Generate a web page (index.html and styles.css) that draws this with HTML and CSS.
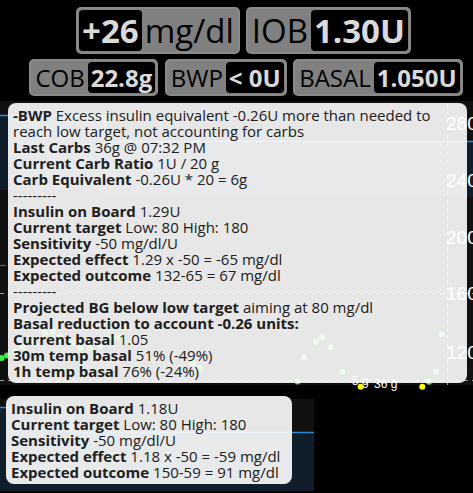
FILE: index.html
```html
<!DOCTYPE html>
<html>
<head>
<meta charset="utf-8">
<link rel="stylesheet" href="styles.css">
</head>
<body>
<div class="app">
  <header class="pills">
    <div class="row row-lg">
      <div class="pill"><em>+26</em><span>mg/dl</span></div>
      <div class="pill"><span>IOB</span><em>1.30U</em></div>
    </div>
    <div class="row row-md">
      <div class="pill"><span>COB</span><em>22.8g</em></div>
      <div class="pill"><span>BWP</span><em>&lt; 0U</em></div>
      <div class="pill"><span>BASAL</span><em>1.050U</em></div>
    </div>
  </header>

  <svg class="chart" width="473" height="397" viewBox="0 96 473 397">
    <!-- main chart -->
    <rect x="0" y="101" width="473" height="284" fill="#111"/>
    <path d="M0 115 H105 V141 H473 V197 H105 V190 H0 Z" fill="#0f1e2a"/>
    <path d="M0 115.5 H105 V141.5 H473" fill="none" stroke="#2b8ad6" stroke-width="1.5"/>
    <g stroke="#9a9a9a" stroke-width="1" stroke-dasharray="4 4" fill="none">
      <line x1="0" y1="293.5" x2="473" y2="293.5"/>
      <line x1="0" y1="380.5" x2="473" y2="380.5"/>
      <line x1="447.5" y1="103" x2="447.5" y2="385"/>
    </g>
    <line x1="0" y1="265.5" x2="6" y2="265.5" stroke="#666"/>
    <g class="ylab" fill="#fff" font-size="19">
      <text x="446" y="130">280</text>
      <text x="446" y="187">240</text>
      <text x="446" y="244">200</text>
      <text x="446" y="300">160</text>
      <text x="446" y="359">120</text>
    </g>
    <g fill="#3df03d">
      <circle cx="1.7" cy="358" r="3"/>
      <circle cx="7" cy="355.5" r="3"/>
      <circle cx="15" cy="352" r="3"/>
      <circle cx="22" cy="346.5" r="3"/>
      <circle cx="33" cy="341.5" r="3"/>
      <circle cx="45" cy="333" r="3"/>
      <circle cx="53" cy="331" r="3"/>
      <circle cx="60" cy="336.5" r="3"/>
      <circle cx="72" cy="343" r="3"/>
      <circle cx="80" cy="348" r="3"/>
      <circle cx="90" cy="348" r="3"/>
      <circle cx="100" cy="346" r="3"/>
      <circle cx="113" cy="338" r="3"/>
      <circle cx="120" cy="337" r="3"/>
      <circle cx="193" cy="363" r="3"/>
      <circle cx="200" cy="368" r="3"/>
      <circle cx="297.5" cy="381.5" r="3"/>
      <circle cx="304" cy="357.3" r="3"/>
      <circle cx="316" cy="341.7" r="3"/>
      <circle cx="321.7" cy="337.3" r="3"/>
      <circle cx="330.7" cy="347.3" r="3"/>
      <circle cx="342.3" cy="371.7" r="3"/>
      <circle cx="429" cy="381.7" r="3"/>
      <circle cx="435.7" cy="371.7" r="3"/>
      <circle cx="441.8" cy="334.3" r="3"/>
    </g>
    <g fill="#ffff00">
      <circle cx="360.7" cy="386.7" r="3"/>
      <circle cx="422.3" cy="386.7" r="3"/>
    </g>
    <g class="carb" fill="#fff" font-size="12">
      <text x="352" y="385">5 g</text>
      <text x="374" y="388">36 g</text>
    </g>

    <!-- focus chart -->
    <rect x="0" y="399" width="314" height="92" fill="#111"/>
    <path d="M0 407 H72 V432 H314 V491 H0 Z" fill="#0f1e2a"/>
    <path d="M0 407.5 H72 V432.5 H314" fill="none" stroke="#2b8ad6" stroke-width="1.5"/>
  </svg>

  <div class="tooltip tip-main">
    <b>-BWP</b> Excess insulin equivalent -0.26U more than needed to<br>
    reach low target, not accounting for carbs<br>
    <b>Last Carbs</b> 36g @ 07:32 PM<br>
    <b>Current Carb Ratio</b> 1U / 20 g<br>
    <b>Carb Equivalent</b> -0.26U * 20 = 6g<br>
    ---------<br>
    <b>Insulin on Board</b> 1.29U<br>
    <b>Current target</b> Low: 80 High: 180<br>
    <b>Sensitivity</b> -50 mg/dl/U<br>
    <b>Expected effect</b> 1.29 x -50 = -65 mg/dl<br>
    <b>Expected outcome</b> 132-65 = 67 mg/dl<br>
    ---------<br>
    <b>Projected BG below low target</b> aiming at 80 mg/dl<br>
    <b>Basal reduction to account -0.26 units:</b><br>
    <b>Current basal</b> 1.05<br>
    <b>30m temp basal</b> 51% (-49%)<br>
    <b>1h temp basal</b> 76% (-24%)
  </div>

  <div class="tooltip tip-focus">
    <b>Insulin on Board</b> 1.18U<br>
    <b>Current target</b> Low: 80 High: 180<br>
    <b>Sensitivity</b> -50 mg/dl/U<br>
    <b>Expected effect</b> 1.18 x -50 = -59 mg/dl<br>
    <b>Expected outcome</b> 150-59 = 91 mg/dl
  </div>
</div>
</body>
</html>
```

FILE: styles.css
```css
html, body {
  margin: 0;
  padding: 0;
  background: #000;
}

.app {
  position: relative;
  width: 473px;
  height: 493px;
  overflow: hidden;
  font-family: "Open Sans", "Noto Sans", sans-serif;
}

.pills {
  height: 96px;
  box-sizing: border-box;
  padding: 7px 0 0 14px;
  display: flex;
  flex-direction: column;
  gap: 5px;
}

.row {
  display: flex;
  justify-content: center;
  gap: 6px;
}

.row-md {
  gap: 6.5px;
  padding-left: 5px;
}

.pill {
  display: flex;
  align-items: center;
  background: #808080;
  border: 2px solid #8a8a8a;
  border-radius: 5px;
  padding: 1px;
  color: #000;
}

.pill em {
  font-style: normal;
  font-weight: bold;
  background: #000;
  color: #dadada;
  border-radius: 4px;
  padding: 0 3px;
}

.pill span {
  padding: 0 3px;
}

.row-lg .pill {
  font-size: 33px;
  line-height: 41px;
}

.row-md .pill {
  font-size: 24px;
  line-height: 31px;
}

.chart {
  display: block;
}

.ylab, .carb {
  font-family: "Liberation Sans", Arial, sans-serif;
}

.tooltip {
  position: absolute;
  box-sizing: border-box;
  background: #fff;
  opacity: 0.9;
  color: #222;
  border-radius: 8px;
  padding: 4px 5px;
  font-size: 15px;
  line-height: 16px;
  white-space: nowrap;
}

.tooltip b {
  font-weight: bold;
}

.tip-main {
  left: 8px;
  top: 103px;
  width: 459px;
}

.tip-focus {
  left: 6px;
  top: 396px;
  width: 286px;
}
```
